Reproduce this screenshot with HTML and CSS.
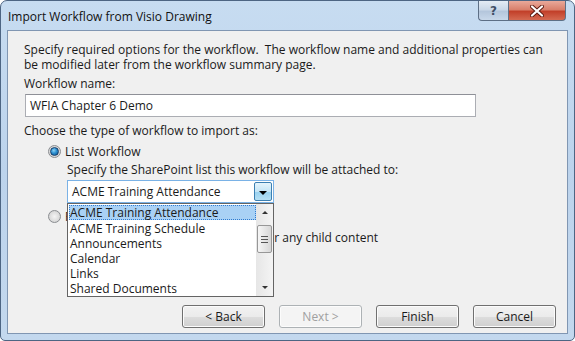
FILE: index.html
```html
<!doctype html>
<html lang="en">

<head>
    <meta charset="UTF-8">
    <title>Import Workflow from Visio Drawing</title>
    <link rel="stylesheet" href="styles.css">
</head>

<body>
    <div class="window">
        <div class="titlebar">
            <span class="title">Import Workflow from Visio Drawing</span>
            <div class="caption">
                <span class="cap_btn help">?</span>
                <span class="cap_btn close">
                    <svg width="14" height="12" viewBox="0 0 14 12">
                        <path d="M2 1.5 L12 10.5 M12 1.5 L2 10.5" stroke="#5a1a10" stroke-width="4" stroke-linecap="round" />
                        <path d="M2 1.5 L12 10.5 M12 1.5 L2 10.5" stroke="#fff" stroke-width="2.2" stroke-linecap="round" />
                    </svg>
                </span>
            </div>
        </div>

        <div class="client">
            <p class="line">Specify required options for the workflow.&nbsp; The workflow name and additional properties can</p>
            <p class="line">be modified later from the workflow summary page.</p>

            <p class="line gap_s">Workflow name:</p>
            <div class="textbox">WFIA Chapter 6 Demo</div>

            <p class="line gap_m">Choose the type of workflow to import as:</p>

            <div class="option gap_m">
                <span class="radio checked"></span>
                <span>List Workflow</span>
            </div>
            <div class="sub">
                <p class="line gap_xs">Specify the SharePoint list this workflow will be attached to:</p>
                <div class="combo">
                    <span class="combo_text">ACME Training Attendance</span>
                    <span class="combo_btn"></span>

                    <div class="dropdown">
                        <ul class="items">
                            <li class="sel">ACME Training Attendance</li>
                            <li>ACME Training Schedule</li>
                            <li>Announcements</li>
                            <li>Calendar</li>
                            <li>Links</li>
                            <li>Shared Documents</li>
                        </ul>
                        <div class="scrollbar">
                            <span class="arrow up"></span>
                            <span class="thumb"><i></i><i></i><i></i></span>
                            <span class="arrow down"></span>
                        </div>
                    </div>
                </div>
            </div>

            <div class="option gap_m">
                <span class="radio"></span>
                <span class="under_list">Reusable Workflow</span>
            </div>
            <p class="line gap_m child">for any child content</p>

            <div class="buttons">
                <button type="button" class="btn">&lt; Back</button>
                <button type="button" class="btn" disabled>Next &gt;</button>
                <button type="button" class="btn">Finish</button>
                <button type="button" class="btn">Cancel</button>
            </div>
        </div>
    </div>
</body>

</html>
```

FILE: styles.css
```css
* {
    margin: 0;
    padding: 0;
    box-sizing: border-box;
}

li {
    list-style: none;
}

body {
    background: #fff;
    font-family: "Open Sans", "Noto Sans", sans-serif;
    font-size: 12px;
    color: #1a1a1a;
}

.window {
    width: 575px;
    height: 341px;
    border: 1px solid #4d6583;
    border-radius: 7px 7px 5px 5px;
    background: linear-gradient(180deg, #c7dcf1 0%, #bcd3ec 50%, #c3d8ee 100%);
    padding: 0 6px 6px 6px;
    display: flex;
    flex-direction: column;
    overflow: hidden;
}

.titlebar {
    height: 29px;
    display: flex;
    justify-content: space-between;
    align-items: flex-start;
    flex-shrink: 0;
}

.title {
    font-size: 12px;
    color: #111;
    padding: 7px 0 0 1px;
}

.caption {
    display: flex;
    margin-right: 2px;
}

.cap_btn {
    height: 20px;
    display: flex;
    align-items: center;
    justify-content: center;
    border: 1px solid #5d6f85;
    border-top: none;
}

.help {
    width: 30px;
    border-radius: 0 0 0 4px;
    border-right: none;
    background: linear-gradient(180deg, #e4ecf5 0%, #cad8e8 45%, #b4c6dc 55%, #c8d8ea 100%);
    color: #3f4f66;
    font-family: "DejaVu Sans", sans-serif;
    font-weight: bold;
    font-size: 12px;
}

.close {
    width: 58px;
    border-radius: 0 0 4px 0;
    background: linear-gradient(180deg, #e9a99a 0%, #d9806c 45%, #c2402a 55%, #d46a52 100%);
}

.client {
    flex: 1;
    background: #f0f0f0;
    border: 1px solid #8096b2;
    padding: 11px 11px 5px 16px;
    display: flex;
    flex-direction: column;
}

.line {
    line-height: 15px;
    white-space: nowrap;
}

.gap_xs {
    margin-top: 3px;
}

.gap_s {
    margin-top: 4px;
}

.gap_m {
    margin-top: 6px;
}

.textbox {
    margin-top: 3px;
    margin-left: 1px;
    width: 451px;
    height: 23px;
    background: #fff;
    border: 1px solid #abadb3;
    border-top-color: #8e9097;
    padding: 3px 0 0 4px;
    line-height: 15px;
}

.option {
    display: flex;
    align-items: center;
    gap: 4px;
    margin-left: 24px;
    height: 15px;
}

.radio {
    flex-shrink: 0;
    width: 13px;
    height: 13px;
    border-radius: 50%;
    border: 1px solid #8a8d91;
    background: radial-gradient(circle at 50% 50%, #f4f4f4 0%, #dcdcdc 60%, #c8c8c8 100%);
    display: flex;
    align-items: center;
    justify-content: center;
}

.radio.checked::after {
    content: "";
    width: 7px;
    height: 7px;
    border-radius: 50%;
    background: radial-gradient(circle at 40% 35%, #8fd3f5 0%, #2b8fd0 45%, #0e4f8c 100%);
    border: 1px solid #173f6b;
}

/* label that the open list covers */
.under_list {
    width: 3px;
    overflow: hidden;
    white-space: nowrap;
}

.sub {
    margin-left: 43px;
}

.combo {
    position: relative;
    margin-top: 3px;
    width: 207px;
    height: 23px;
    background: #fff;
    border: 1px solid #7ab2e6;
    display: flex;
    align-items: center;
    justify-content: space-between;
    padding: 0 1px 0 4px;
}

.combo_text {
    line-height: 15px;
}

.combo_btn {
    width: 18px;
    height: 19px;
    border: 1px solid #3c7fb1;
    border-radius: 2px;
    background: linear-gradient(180deg, #e5f4fc 0%, #c4e5f6 50%, #98d1ef 51%, #b6e0f4 100%);
    display: flex;
    align-items: center;
    justify-content: center;
}

.combo_btn::after {
    content: "";
    border-left: 4px solid transparent;
    border-right: 4px solid transparent;
    border-top: 4px solid #000;
    margin-top: 2px;
}

/* open list lies over the rest of the form */
.dropdown {
    position: absolute;
    top: 22px;
    left: -1px;
    width: 207px;
    height: 94px;
    background: #fff;
    border: 1px solid #646464;
    display: flex;
    z-index: 2;
}

.items {
    flex: 1;
    padding: 1px 0 0 1px;
}

.items li {
    height: 15px;
    line-height: 15px;
    padding-left: 1px;
    white-space: nowrap;
}

.items li + li {
    position: relative;
    top: 1px;
}

.items li.sel {
    background: #a9d1f5;
    border: 1px dotted #2f7bd0;
    line-height: 13px;
    padding: 0;
}

.scrollbar {
    width: 17px;
    background: linear-gradient(90deg, #e6e6e6, #f4f4f4);
    display: flex;
    flex-direction: column;
    align-items: center;
}

.arrow {
    display: block;
    width: 0;
    height: 0;
    border-left: 3px solid transparent;
    border-right: 3px solid transparent;
}

.arrow.up {
    border-bottom: 3px solid #333;
    margin-top: 7px;
}

.arrow.down {
    border-top: 3px solid #333;
    margin-top: auto;
    margin-bottom: 7px;
}

.thumb {
    margin-top: 11px;
    width: 15px;
    height: 28px;
    border: 1px solid #979797;
    border-radius: 2px;
    background: linear-gradient(90deg, #f6f6f6 0%, #e6e6e6 50%, #d6d6d6 100%);
    display: flex;
    flex-direction: column;
    align-items: center;
    justify-content: center;
    gap: 2px;
}

.thumb i {
    display: block;
    width: 7px;
    height: 1px;
    background: #555;
}

.child {
    padding-left: 239px;
}

.buttons {
    margin-top: auto;
    display: flex;
    justify-content: flex-end;
    gap: 14px;
}

.btn {
    width: 83px;
    height: 23px;
    font-family: inherit;
    font-size: 12px;
    color: #1a1a1a;
    border: 1px solid #707070;
    border-radius: 3px;
    background: linear-gradient(180deg, #f2f2f2 0%, #ebebeb 50%, #dddddd 51%, #cfcfcf 100%);
    box-shadow: inset 0 0 0 1px #fcfcfc;
}

.btn:disabled {
    color: #a0a0a0;
    border-color: #adb2b5;
    background: #f4f4f4;
}
```
